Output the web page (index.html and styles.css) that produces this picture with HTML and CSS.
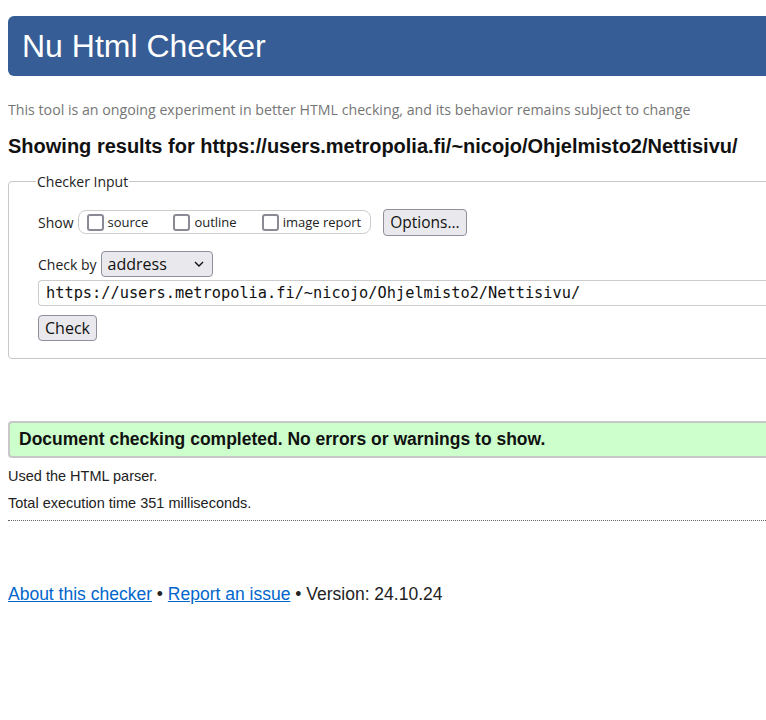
FILE: index.html
```html
<!DOCTYPE html>
<html>
<head>
<meta charset="utf-8">
<title>Nu Html Checker</title>
<link rel="stylesheet" href="styles.css">
</head>
<body>
<h1 class="banner">Nu Html Checker</h1>
<p class="intro">This tool is an ongoing experiment in better HTML checking, and its behavior remains subject to change</p>
<h2 class="results-for">Showing results for https://users.metropolia.fi/~nicojo/Ohjelmisto2/Nettisivu/</h2>
<form class="checker">
  <fieldset class="input-set">
    <legend>Checker Input</legend>
    <div class="row show-row">
      <span class="label">Show</span>
      <span class="group">
        <label class="opt"><span class="box"></span>source</label>
        <label class="opt"><span class="box"></span>outline</label>
        <label class="opt"><span class="box"></span>image report</label>
      </span>
      <button type="button" class="btn options">Options...</button>
    </div>
    <div class="row by-row">
      <span class="label">Check by</span>
      <span class="select">address
        <svg class="chev" width="10" height="6" viewBox="0 0 10 6"><path d="M1 1l4 4 4-4" fill="none" stroke="#111" stroke-width="1.4"/></svg>
      </span>
    </div>
    <div class="url">https://users.metropolia.fi/~nicojo/Ohjelmisto2/Nettisivu/</div>
    <button type="button" class="btn check">Check</button>
  </fieldset>
</form>
<p class="success">Document checking completed. No errors or warnings to show.</p>
<p class="details">Used the HTML parser.</p>
<p class="details">Total execution time 351 milliseconds.</p>
<hr class="sep">
<p class="footer"><a href="#">About this checker</a> • <a href="#">Report an issue</a> • Version: 24.10.24</p>
</body>
</html>
```
FILE: styles.css
```css
html, body { overflow: hidden; }
body {
  margin: 8px;
  margin-right: -60px;
  font-family: "Liberation Sans", Arial, sans-serif;
  color: #111;
  background: #fff;
}
.banner {
  margin: 8px 0 0 0;
  height: 60px;
  box-sizing: border-box;
  background: #365d95;
  color: #fff;
  font-weight: normal;
  font-size: 32px;
  line-height: 60px;
  padding-left: 14px;
  border-radius: 6px 0 0 6px;
}
.intro {
  margin: 24px 0 0 0;
  font-family: "Open Sans", "Noto Sans", sans-serif;
  font-size: 14.2px;
  line-height: 20px;
  color: #767676;
}
.results-for {
  margin: 14px 0 0 0;
  font-size: 20px;
  line-height: 24px;
  font-weight: bold;
  color: #111;
}
.checker { margin: 14px 0 0 0; }
.input-set {
  margin: 0;
  border: 1px solid #c8c8c8;
  border-radius: 4px 0 0 4px;
  padding: 9px 0 17px 29px;
  font-family: "Open Sans", "Noto Sans", sans-serif;
  font-size: 14px;
  color: #222;
}
.input-set legend {
  padding: 0 1px;
  margin-left: -2px;
  font-size: 14px;
}
.row { display: flex; align-items: center; }
.show-row { margin-top: 8px; height: 28px; }
.label { margin-right: 4px; }
.group {
  display: inline-flex;
  align-items: center;
  height: 24px;
  box-sizing: border-box;
  border: 1px solid #ccc;
  border-radius: 8px;
  padding: 0 9px 0 8px;
  font-size: 13px;
}
.opt { display: inline-flex; align-items: center; margin-right: 25px; }
.opt:last-child { margin-right: 0; }
.box {
  width: 13px; height: 13px;
  border: 2px solid #8a8a96;
  border-radius: 3px;
  margin-right: 4px;
  background: #fff;
}
.btn {
  font-family: "Open Sans", "Noto Sans", sans-serif;
  font-size: 15.5px;
  background: #e9e9ed;
  border: 1px solid #8f8f9d;
  border-radius: 4px;
  color: #111;
  padding: 0 6px;
  height: 27px;
}
.options { margin-left: 12px; }
.by-row { margin-top: 15px; }
.select {
  display: inline-flex;
  align-items: center;
  justify-content: space-between;
  width: 112px;
  height: 26px;
  box-sizing: border-box;
  border: 1px solid #8f8f9d;
  border-radius: 4px;
  background: #e9e9ed;
  padding: 0 6px 0 6px;
  font-size: 16px;
  color: #111;
}
.chev { margin-right: 2px; }
.url {
  margin-top: 3px;
  height: 26px;
  box-sizing: border-box;
  border: 1px solid #ccc;
  border-right: none;
  border-radius: 4px 0 0 4px;
  padding: 0 7px;
  font-family: "DejaVu Sans Mono", monospace;
  font-size: 15.3px;
  line-height: 24px;
  color: #111;
}
.check { margin-top: 9px; height: 26px; padding: 0 6px; font-size: 16px; }
.success {
  margin: 62px 0 0 0;
  height: 37px;
  box-sizing: border-box;
  background: #ccffcc;
  border: 2px solid #c8c8c8;
  border-right: none;
  border-radius: 4px 0 0 4px;
  padding-left: 9px;
  font-weight: bold;
  font-size: 17.5px;
  line-height: 33px;
}
.details {
  margin: 9px 0 0 0;
  font-size: 14.5px;
  line-height: 18px;
  color: #222;
}
.details + .details { margin-top: 9px; }
.sep {
  margin: 8px 0 0 0;
  border: none;
  border-top: 1px dotted #666;
  height: 0;
}
.footer {
  margin: 62px 0 0 0;
  font-size: 17.5px;
  line-height: 22px;
  color: #222;
}
.footer a { color: #0066cc; }
```
